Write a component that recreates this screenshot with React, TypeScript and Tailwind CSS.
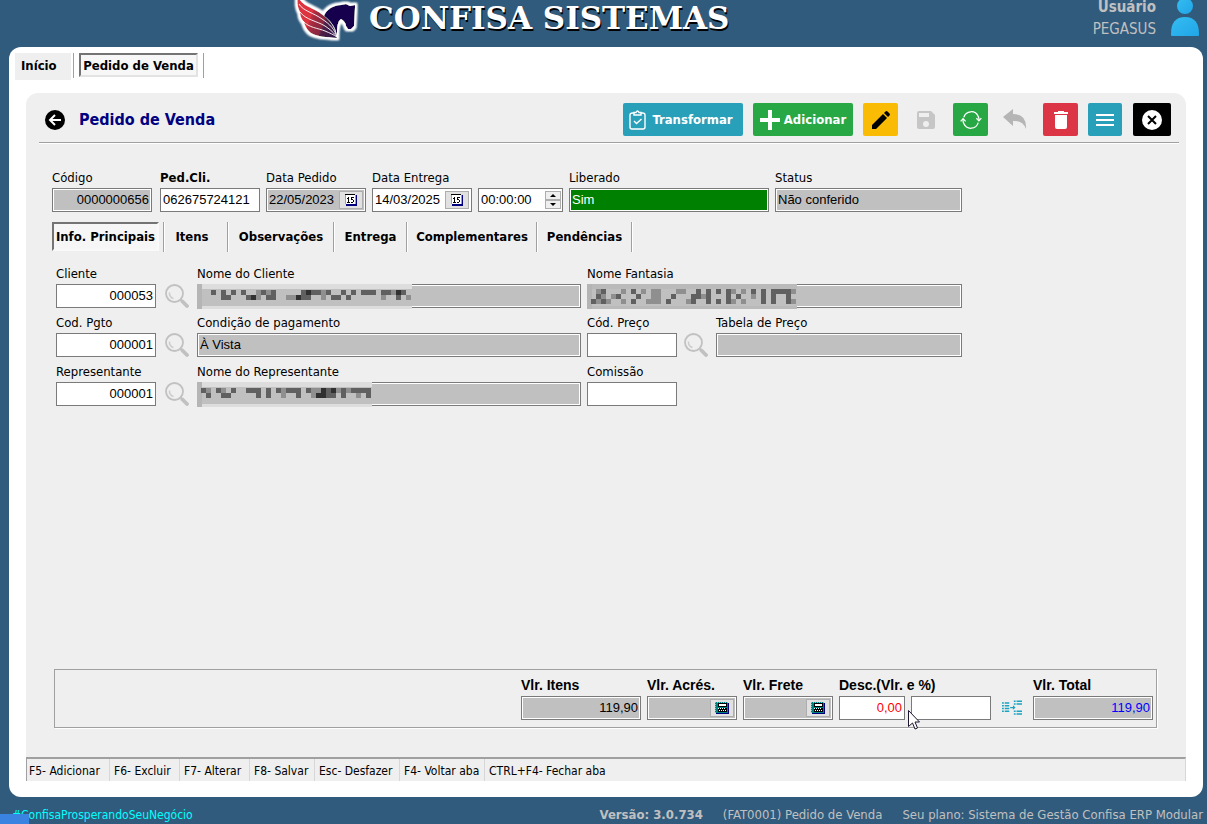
import type { ReactNode } from 'react';

const UI = "font-['DejaVu_Sans_Condensed','Noto_Sans',sans-serif]";
const ARIAL = "font-['Liberation_Sans',sans-serif]";

type FieldProps = {
  id: string;
  label?: string;
  value?: string;
  width: string;
  bold?: boolean;
  locked?: boolean;
  tone?: string;
  children?: ReactNode;
};

function Field({ id, label, value = '', width, bold, locked, tone = '', children }: FieldProps) {
  const fill = locked ? 'bg-[#c0c0c0]' : 'bg-white';
  return (
    <div className={`flex flex-col ${width}`}>
      <label htmlFor={id} className={`h-[22px] whitespace-nowrap text-[13px] leading-[23px] ${bold ? 'font-bold' : ''}`}>
        {label}
      </label>
      <div className="relative flex h-6 border border-[#7a7a7a] bg-white p-px">
        <input
          id={id}
          aria-label={label ? undefined : id}
          defaultValue={value}
          readOnly={locked}
          className={`min-w-0 flex-1 px-px pb-px text-[13px] outline-none ${ARIAL} ${tone.includes('bg-') ? '' : fill} ${tone}`}
        />
        {children}
      </div>
    </div>
  );
}

function CalendarButton({ locked }: { locked?: boolean }) {
  return (
    <div className={`flex items-center p-px ${locked ? 'bg-[#c0c0c0]' : 'bg-white'}`}>
      <button aria-label="Calendário" className="flex h-[18px] w-6 items-center justify-center border border-[#adadad] bg-[#e1e1e1]">
        <svg width="12" height="12" viewBox="0 0 12 12" shapeRendering="crispEdges">
          <path d="M1 1h11v11H1z" fill="#000080" />
          <path d="M0 0h10v10H0z" fill="#fff" />
          <path d="M0 0h10v1H0z" fill="#000" />
          <path d="M0 1h1v9H0zM10 1h1v9h-1z" fill="#a0a0a0" />
          <path d="M3 3h1v5H3zM2 4h1v1H2zM2 8h3v1H2zM6 3h3v1H6zM6 4h1v2H6zM6 5h2v1H6zM8 6h1v2H8zM6 8h2v1H6z" fill="#000" />
        </svg>
      </button>
    </div>
  );
}

function CalculatorButton() {
  return (
    <div className="flex items-center bg-[#c0c0c0] p-px">
      <button aria-label="Calculadora" className="flex h-[18px] w-6 items-center justify-center border border-[#adadad] bg-[#e1e1e1]">
        <svg width="14" height="12" viewBox="0 0 14 12" shapeRendering="crispEdges">
          <path d="M1 1h13v11H1z" fill="#000080" />
          <path d="M0 0h13v11H0z" fill="#008080" />
          <path d="M.500 0v11M0 .500h13" stroke="#00ffff" strokeDasharray="1 1" />
          <path d="M3 1h9v4H3z" fill="#000" />
          <path d="M4 2h7v2H4z" fill="#fff" />
          <path d="M3 6h9v4H3z" fill="#000" />
          <path d="M3 6h1v1H3zM5 6h1v1H5zM7 6h1v1H7zM9 6h1v1H9zM4 8h1v1H4zM6 8h1v1H6zM8 8h1v1H8zM10 8h1v1h-1z" fill="#fff" />
        </svg>
      </button>
    </div>
  );
}

function SearchButton() {
  return (
    <button aria-label="Pesquisar" className="mt-[22px] flex h-6 w-6 items-center justify-center">
      <svg width="24" height="24" viewBox="0 0 24 24" fill="none">
        <circle cx="9.500" cy="9.500" r="8.500" stroke="#c1c1c1" strokeWidth="1.800" />
        <path d="M4.500 8.500a5.500 5.500 0 0 0 4 6" stroke="#cdcdcd" strokeWidth="1.600" />
        <path d="M15.500 15.500l2 2" stroke="#c1c1c1" strokeWidth="2" />
        <path d="M17.500 17.500l4.500 4.500" stroke="#c1c1c1" strokeWidth="3.800" strokeLinecap="round" />
      </svg>
    </button>
  );
}

const SHADES = ['none', '#8f8f8f', '#606060', '#303030'];

function Redaction({ rows, top = 6, left = 4, edge = '#dddddd' }: { rows: string[]; top?: number; left?: number; edge?: string }) {
  const width = rows[0].length * 5 + left + 1;
  return (
    <svg className="pointer-events-none absolute -left-px -top-px" width={width} height="25" shapeRendering="crispEdges">
      <rect width={width} height="25" fill={edge} />
      <rect y="5" width={width} height="17" fill="#c0c0c0" />
      <rect width="5" height="25" fill="#b5b5b5" />
      {rows.map((row, y) =>
        [...row].map((cell, x) => (
          <rect key={`${x}-${y}`} x={left + x * 5} y={top + y * 5} width="5" height="5" fill={SHADES[Number(cell)]} />
        )),
      )}
    </svg>
  );
}

function TabButton({ label, width, active }: { label: string; width: string; active?: boolean }) {
  return (
    <button
      role="tab"
      aria-selected={!!active}
      className={`flex items-center justify-center whitespace-nowrap text-[13px] font-bold ${width} ${
        active ? 'h-[29px] border-2 border-[#f9f9f9] border-l-[#747474] border-t-[#747474] bg-[#f6f6f6] pt-px' : 'h-[29px]'
      }`}
    >
      {label}
    </button>
  );
}

function Rule() {
  return <span className="h-[30px] w-[2px] shrink-0 border-l border-r border-l-[#a0a0a0] border-r-white" />;
}

function Logo() {
  return (
    <svg width="70" height="54" viewBox="0 0 70 54" className="shrink-0">
      <defs>
        <filter id="halo" x="-20%" y="-20%" width="140%" height="140%">
          <feMorphology in="SourceAlpha" operator="dilate" radius="2" result="wide" />
          <feGaussianBlur in="wide" stdDeviation="1.300" result="soft" />
          <feFlood floodColor="#fff" />
          <feComposite in2="soft" operator="in" result="white" />
          <feMerge>
            <feMergeNode in="white" />
            <feMergeNode in="white" />
            <feMergeNode in="SourceGraphic" />
          </feMerge>
        </filter>
        <linearGradient id="wing" gradientUnits="userSpaceOnUse" x1="8" x2="46" y1="22" y2="36">
          <stop offset=".3" stopColor="#dc3440" />
          <stop offset=".32" stopColor="#b92e40" />
          <stop offset=".48" stopColor="#96293f" />
          <stop offset=".64" stopColor="#8a2840" />
          <stop offset=".68" stopColor="#502046" />
          <stop offset="1" stopColor="#30184a" />
        </linearGradient>
      </defs>
      <g filter="url(#halo)">
        <path d="M7 5C9 12 16 15 24 19c11 6 20 14 22 28-10-1-20-1-26-5-5-4-6-8-7-11-3-3-4-7-4-10-3-6-3-11-2-16z" fill="url(#wing)" />
        <path d="M33 25c2-6 9-11 17-11l5-1 4 2 5-1v3l-1 18-3 3h-3l-2-3c0-3-2-5-5-7-4 3-4 9-4 18-1-9-5-15-13-21z" fill="#12064d" />
      </g>
      <path
        d="M8 13c4 7 15 9 23 15 8 5 13 11 15 18M9 21c6 8 17 9 25 14 6 4 9 7 12 11M12 30c6 7 15 7 22 10 5 2 9 4 12 6"
        fill="none"
        stroke="#fff"
        strokeWidth=".9"
      />
    </svg>
  );
}

const toolbarButton = 'flex h-[33px] items-center justify-center rounded-[2px]';

function Toolbar() {
  return (
    <div className="flex items-center">
      <button className={`${toolbarButton} w-[120px] gap-[6px] bg-[#29a0b9] pr-1 text-[13px] font-bold text-white`}>
        <svg width="17" height="20" viewBox="0 0 17 20" fill="none" stroke="#fff" strokeWidth="1.400">
          <path d="M5 3H3.500Q1 3 1 5v12q0 2 2 2h11q2 0 2-2V5q0-2-2.500-2H12" />
          <path d="M5 5V2.500h2Q8.500-.5 10 2.500h2V5z" />
          <path d="M5 11l2.500 2.500L12.500 9" />
        </svg>
        Transformar
      </button>
      <button className={`${toolbarButton} ml-[10px] w-[100px] gap-1 bg-[#28a745] text-[13px] font-bold text-white`}>
        <svg width="20" height="20" viewBox="0 0 20 20">
          <path d="M10 0v20M0 10h20" stroke="#fff" strokeWidth="4" />
        </svg>
        Adicionar
      </button>
      <button aria-label="Alterar" className={`${toolbarButton} ml-[10px] w-[35px] bg-[#fabb05]`}>
        <svg width="20" height="20" viewBox="0 0 20 20">
          <path d="M1 15L12 4l4 4L5 19H1zM13 3l1.500-1.500q1-1 2 0l2 2q1 1 0 2L17 7z" />
        </svg>
      </button>
      <button aria-label="Salvar" disabled className={`${toolbarButton} ml-[10px] w-[35px]`}>
        <svg width="18" height="18" viewBox="0 0 18 18">
          <path d="M2 0h12l4 4v12q0 2-2 2H2q-2 0-2-2V2Q0 0 2 0z" fill="#c6c6c6" />
          <path d="M2 2h10v4H2z" fill="#efefef" />
          <circle cx="9" cy="13" r="3" fill="#efefef" />
        </svg>
      </button>
      <button aria-label="Atualizar" className={`${toolbarButton} ml-[10px] w-[35px] bg-[#28a745]`}>
        <svg width="22" height="18" viewBox="0 0 24 20" fill="none" stroke="#fff" strokeWidth="1.400">
          <path d="M4 7a8.500 8.500 0 0 1 16-1q1 2 .8 4M20 13A8.500 8.500 0 0 1 4 14q-1-2-.8-4" />
          <path d="M18 8l2.800 3L23.500 8M.5 11.500l2.700-3 2.800 3" />
        </svg>
      </button>
      <button aria-label="Desfazer" disabled className={`${toolbarButton} ml-[9px] w-[35px]`}>
        <svg width="24" height="21" viewBox="0 0 24 21">
          <path d="M0 8l10-8v5q14 0 13 15-3-9-13-8v5z" fill="#b5b5b5" />
        </svg>
      </button>
      <button aria-label="Excluir" className={`${toolbarButton} ml-[11px] w-[35px] bg-[#dc3545]`}>
        <svg width="14" height="18" viewBox="0 0 14 18" fill="#fff">
          <path d="M0 1h4V0h6v1h4v2H0zM1 4h12v12q0 2-2 2H3q-2 0-2-2z" />
        </svg>
      </button>
      <button aria-label="Menu" className={`${toolbarButton} ml-[10px] w-[34px] bg-[#29a0b9]`}>
        <svg width="18" height="12" viewBox="0 0 18 12">
          <path d="M0 1h18M0 6h18M0 11h18" stroke="#fff" strokeWidth="2" />
        </svg>
      </button>
      <button aria-label="Fechar" className={`${toolbarButton} ml-[11px] w-[38px] bg-black`}>
        <svg width="20" height="20" viewBox="0 0 20 20">
          <circle cx="10" cy="10" r="10" fill="#fff" />
          <path d="M6 6l8 8M14 6l-8 8" stroke="#000" strokeWidth="2" />
        </svg>
      </button>
    </div>
  );
}

function Totals() {
  return (
    <section className="relative ml-7 mr-[29px] mb-[29px] mt-auto flex justify-end border border-[#a0a0a0] pb-[7px] pr-[3px] pt-1 shadow-[1px_1px_0_#fff]">
      <div className={`flex gap-[6px] ${ARIAL} [&_label]:text-[14px] [&_label]:font-bold`}>
        <Field id="vlr-itens" label="Vlr. Itens" value="119,90" width="w-[120px]" locked tone="text-right" />
        <Field id="vlr-acres" label="Vlr. Acrés." width="w-[90px]" locked>
          <CalculatorButton />
        </Field>
        <Field id="vlr-frete" label="Vlr. Frete" width="w-[90px]" locked>
          <CalculatorButton />
        </Field>
        <div className="relative flex gap-[6px]">
          <Field id="desconto" label="Desc.(Vlr. e %)" value="0,00" width="w-[66px]" tone="text-right text-[#f00]" />
          <Field id="desconto-percentual" width="w-[80px]" />
          <svg className="pointer-events-none absolute left-[69px] top-9" width="12" height="20" viewBox="0 0 12 20">
            <path d="M.5.500v16l4-3.500 2.500 6 2.500-1-2.500-6h4.500z" fill="#fff" stroke="#1c1430" />
          </svg>
        </div>
        <button aria-label="Ratear desconto" className="mt-[22px] flex h-6 w-[30px] items-center justify-center">
          <svg width="20" height="17" viewBox="0 0 22 18" stroke="#1ca3c0" strokeWidth="1.500">
            <path d="M0 3h2M0 6h2M0 9h2M0 12h2M13 1h2M13 4h2M13 12h2M13 15h2" />
            <path d="M3 3h5M3 6h5M3 9h5M3 12h5M16 1h6M16 4h6M16 12h6M16 15h6M9 8h5" />
            <path d="M12 5.500L15 8l-3 2.500z" fill="#1ca3c0" stroke="none" />
          </svg>
        </button>
        <Field id="vlr-total" label="Vlr. Total" value="119,90" width="w-[120px]" locked tone="text-right text-[#00f]" />
      </div>
    </section>
  );
}

const shortcuts = [
  { text: 'F5- Adicionar', width: 'w-[83px]' },
  { text: 'F6- Excluir', width: 'w-[70px]' },
  { text: 'F7- Alterar', width: 'w-[70px]' },
  { text: 'F8- Salvar', width: 'w-[65px]' },
  { text: 'Esc- Desfazer', width: 'w-[85px]' },
  { text: 'F4- Voltar aba', width: 'w-[85px]' },
  { text: 'CTRL+F4- Fechar aba', width: 'flex-1' },
];

export default function App() {
  return (
    <div className={`relative flex min-h-screen flex-col bg-[#305b7d] text-black ${UI}`}>
      <header className="flex h-[47px] items-center overflow-hidden pb-3 pr-2">
        <div className="flex items-center pl-[291px]">
          <Logo />
          <h1 className="ml-[8px] whitespace-nowrap font-['DejaVu_Serif',serif] text-[31px] font-bold leading-[34px] text-white [text-shadow:1px_2px_0_#000]">
            CONFISA SISTEMAS
          </h1>
        </div>
        <div className="ml-auto text-right text-[15px] leading-[22px] text-[#c0c0c0]">
          <p className="font-bold">Usuário</p>
          <p>PEGASUS</p>
        </div>
        <svg className="ml-[15px] shrink-0" width="28" height="42" viewBox="0 0 28 42">
          <defs>
            <linearGradient id="avatar" x1="0" y1="0" x2="1" y2="1">
              <stop stopColor="#35bdf1" />
              <stop offset="1" stopColor="#20a5e8" />
            </linearGradient>
          </defs>
          <circle cx="14" cy="9" r="8" fill="url(#avatar)" />
          <path d="M0 37Q0 20 14 20t14 17v1q0 1-1 1H1q-1 0-1-1z" fill="url(#avatar)" />
        </svg>
      </header>

      <main className="ml-[9px] mr-1 flex flex-1 flex-col rounded-[12px] bg-white pb-4 pl-[17px] pr-[17px]">
        <nav className="-ml-[11px] flex h-[46px] items-start pt-[6px]">
          <button className="h-[27px] w-14 bg-[#efefef] pb-[2px] pl-[6px] text-left text-[13px] font-bold">Início</button>
          <span className="ml-[2px] h-[25px] w-px bg-[#a0a0a0]" />
          <button className="ml-[5px] flex h-6 w-[119px] items-center justify-center whitespace-nowrap border-2 border-[#e3e3e3] border-l-[#747474] border-t-[#747474] bg-[#f7f7f7] pt-px text-[13px] font-bold">
            Pedido de Venda
          </button>
          <span className="ml-[5px] h-[25px] w-px bg-[#a0a0a0]" />
        </nav>

        <div className="flex flex-1 flex-col rounded-t-[12px] bg-[#efefef]">
          <div className="ml-[13px] mr-[7px] flex items-center border-b border-[#a0a0a0] pb-[6px] pl-[6px] pr-2 pt-[10px] shadow-[0_1px_0_#fff]">
            <button aria-label="Voltar" className="flex h-5 w-5 items-center justify-center">
              <svg width="20" height="20" viewBox="0 0 20 20">
                <circle cx="10" cy="10" r="10" />
                <path d="M16 10H6M10 5l-5 5 5 5" stroke="#fff" strokeWidth="2" fill="none" />
              </svg>
            </button>
            <h2 className="ml-[14px] text-[16px] font-bold text-[#000080]">Pedido de Venda</h2>
            <div className="ml-auto">
              <Toolbar />
            </div>
          </div>

          <form className="flex flex-col pl-[26px] pt-[23px]" onSubmit={(event) => event.preventDefault()}>
            <div className="flex gap-[6px]">
              <Field id="codigo" label="Código" value="0000000656" width="w-[100px]" locked tone="text-right" />
              <Field id="ped-cli" label="Ped.Cli." value="062675724121" width="w-[100px] ml-[2px]" bold />
              <Field id="data-pedido" label="Data Pedido" value="22/05/2023" width="w-[100px]" locked>
                <CalendarButton locked />
              </Field>
              <Field id="data-entrega" label="Data Entrega" value="14/03/2025" width="w-[100px]">
                <CalendarButton />
              </Field>
              <Field id="hora-entrega" value="00:00:00" width="w-[85px]">
                <div className="flex w-4 flex-col py-px">
                  <button aria-label="Aumentar" className="flex flex-1 items-center justify-center border border-[#adadad] bg-[#efefef]">
                    <svg width="6" height="3" viewBox="0 0 6 3"><path d="M0 3l3-3 3 3z" /></svg>
                  </button>
                  <button aria-label="Diminuir" className="flex flex-1 items-center justify-center border border-[#adadad] bg-[#efefef]">
                    <svg width="6" height="3" viewBox="0 0 6 3"><path d="M0 0l3 3 3-3z" /></svg>
                  </button>
                </div>
              </Field>
              <Field id="liberado" label="Liberado" value="Sim" width="w-[200px]" tone="bg-[#008000] text-white" />
              <Field id="status" label="Status" value="Não conferido" width="w-[187px]" locked />
            </div>

            <div role="tablist" className="mt-[10px] flex h-[30px]">
              <TabButton label="Info. Principais" width="w-[107px]" active />
              <span className="w-1" />
              <Rule />
              <TabButton label="Itens" width="w-[54px]" />
              <span className="w-2" />
              <Rule />
              <TabButton label="Observações" width="w-[104px]" />
              <Rule />
              <TabButton label="Entrega" width="w-[71px]" />
              <Rule />
              <TabButton label="Complementares" width="w-[128px]" />
              <Rule />
              <TabButton label="Pendências" width="w-[93px]" />
              <Rule />
            </div>

            <div className="mt-[10px] flex flex-col gap-[3px] pl-1">
              <div className="flex">
                <Field id="cliente" label="Cliente" value="000053" width="w-[100px] mr-[9px]" tone="text-right" />
                <SearchButton />
                <Field id="nome-cliente" label="Nome do Cliente" width="w-[384px] ml-[8px]" locked>
                  <Redaction
                    rows={[
                      '002020202001212000002322120020202220221320',
                      '000022000231022001132200102202000000100201',
                    ]}
                  />
                </Field>
                <Field id="nome-fantasia" label="Nome Fantasia" width="w-[375px] ml-[6px]" locked>
                  <Redaction
                    edge="#bababa"
                    top={5}
                    rows={[
                      '01200010201011000110020202021010202022221',
                      '02101200020011002000221200020200102020020',
                      '21210010200111020001200202021010002020021',
                    ]}
                  />
                </Field>
              </div>
              <div className="flex">
                <Field id="cod-pgto" label="Cod. Pgto" value="000001" width="w-[100px] mr-[9px]" tone="text-right" />
                <SearchButton />
                <Field id="condicao" label="Condição de pagamento" value="À Vista" width="w-[384px] ml-[8px]" locked />
                <Field id="cod-preco" label="Cód. Preço" width="w-[90px] ml-[6px] mr-[7px]" />
                <SearchButton />
                <Field id="tabela-preco" label="Tabela de Preço" width="w-[246px] ml-[8px]" locked />
              </div>
              <div className="flex">
                <Field id="representante" label="Representante" value="000001" width="w-[100px] mr-[9px]" tone="text-right" />
                <SearchButton />
                <Field id="nome-representante" label="Nome do Representante" width="w-[384px] ml-[8px]" locked>
                  <Redaction
                    rows={[
                      '2102102002220202122202113231212222',
                      '0200220000020200100200133220200102',
                    ]}
                  />
                </Field>
                <Field id="comissao" label="Comissão" width="w-[90px] ml-[6px]" />
              </div>
            </div>
          </form>

          <Totals />

          <ul className="flex h-6 border-l border-r border-t-2 border-l-[#a0a0a0] border-r-[#d7d7d7] border-t-[#a0a0a0] text-[12px]">
            {shortcuts.map(({ text, width }) => (
              <li key={text} className={`${width} whitespace-nowrap border-r border-[#d7d7d7] pl-1 pt-1 leading-[16px] first:pl-[2px] last:border-r-0`}>
                {text}
              </li>
            ))}
          </ul>
        </div>
      </main>

      <footer className="flex h-[27px] items-end whitespace-nowrap pl-3 pr-1 text-[13px] leading-[18px] text-[#c0c0c0]">
        <a href="#inicio" className="text-[12px] text-[#00ffff]">#ConfisaProsperandoSeuNegócio</a>
        <span className="ml-auto font-bold">Versão: 3.0.734</span>
        <span className="ml-5">(FAT0001) Pedido de Venda</span>
        <span className="ml-5">Seu plano: Sistema de Gestão Confisa ERP Modular</span>
      </footer>
      <span className="absolute bottom-0 left-0 h-[10px] w-[29px] bg-[#3b83e0]" />
    </div>
  );
}
